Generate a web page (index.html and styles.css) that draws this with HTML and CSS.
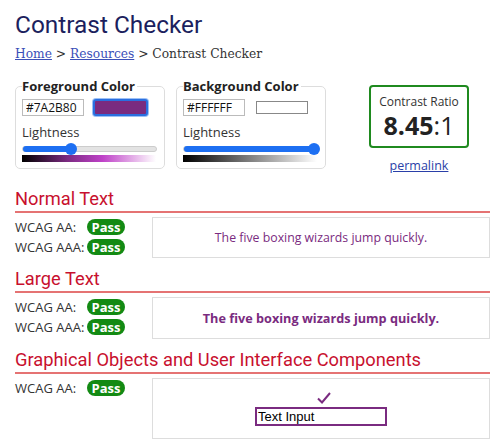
FILE: index.html
```html
<!DOCTYPE html>
<html>
<head>
<meta charset="utf-8">
<link rel="stylesheet" href="styles.css">
</head>
<body>
<h1 class="title">Contrast Checker</h1>
<nav class="crumbs"><a href="#">Home</a> &gt; <a href="#">Resources</a> &gt; Contrast Checker</nav>

<div class="top">
  <fieldset class="picker">
    <legend>Foreground Color</legend>
    <div class="row">
      <input class="hex" type="text" value="#7A2B80">
      <span class="swatch fg"></span>
    </div>
    <div class="light">Lightness</div>
    <div class="slider"><span class="fill" style="width:48px"></span><span class="thumb" style="left:48px"></span></div>
    <div class="grad fg-grad"></div>
  </fieldset>
  <fieldset class="picker">
    <legend>Background Color</legend>
    <div class="row">
      <input class="hex" type="text" value="#FFFFFF">
      <span class="swatch bg"></span>
    </div>
    <div class="light">Lightness</div>
    <div class="slider"><span class="fill" style="width:130px"></span><span class="thumb" style="left:130px"></span></div>
    <div class="grad bg-grad"></div>
  </fieldset>
  <div class="ratio-col">
    <div class="ratio">
      <div class="ratio-label">Contrast Ratio</div>
      <div class="ratio-val"><b>8.45</b>:1</div>
    </div>
    <a class="permalink" href="#">permalink</a>
  </div>
</div>

<h2 class="sec">Normal Text</h2>
<div class="res">
  <div class="levels">
    <div class="lv"><span class="lbl">WCAG AA:</span><span class="pass">Pass</span></div>
    <div class="lv"><span class="lbl">WCAG AAA:</span><span class="pass">Pass</span></div>
  </div>
  <div class="sample normal">The five boxing wizards jump quickly.</div>
</div>

<h2 class="sec">Large Text</h2>
<div class="res">
  <div class="levels">
    <div class="lv"><span class="lbl">WCAG AA:</span><span class="pass">Pass</span></div>
    <div class="lv"><span class="lbl">WCAG AAA:</span><span class="pass">Pass</span></div>
  </div>
  <div class="sample large">The five boxing wizards jump quickly.</div>
</div>

<h2 class="sec">Graphical Objects and User Interface Components</h2>
<div class="res">
  <div class="levels">
    <div class="lv"><span class="lbl">WCAG AA:</span><span class="pass">Pass</span></div>
  </div>
  <div class="sample ui">
    <svg class="check" width="14" height="12" viewBox="0 0 14 12"><path d="M1 6.5 L5 10.5 L13 1" fill="none" stroke="#7A2B80" stroke-width="2"/></svg>
    <div class="tinput">Text Input</div>
  </div>
</div>
</body>
</html>
```

FILE: styles.css
```css
* { box-sizing: border-box; }
body {
  margin: 0;
  padding: 10px 10px 0 15px;
  font-family: "Open Sans", sans-serif;
  color: #333;
  background: #fff;
  width: 500px;
  height: 444px;
  overflow: hidden;
}
.title {
  margin: 0;
  font-family: Roboto, sans-serif;
  font-weight: 400;
  font-size: 24.4px;
  line-height: 30px;
  color: #1c1f5e;
}
.crumbs {
  margin-top: 6px;
  font-family: "DejaVu Serif", serif;
  font-size: 12.25px;
  line-height: 16px;
  color: #333;
}
.crumbs a { color: #3b4fb8; }
.top {
  display: flex;
  margin-top: 17px;
  height: 109px;
}
.picker {
  margin: 0 11px 0 0;
  width: 150px;
  height: 90px;
  border: 1px solid #ddd;
  border-radius: 5px;
  padding: 0 6px 0 6px;
}
.picker legend {
  font-weight: 700;
  font-size: 13px;
  color: #222;
  padding: 0 2px 0 0;
  line-height: 14px;
}
.row { display: flex; gap: 9px; margin-top: 6px; }
.hex {
  width: 62px;
  height: 17px;
  border: 1px solid #bbb;
  font-family: "Open Sans", sans-serif;
  font-size: 12px;
  padding: 0 3px;
  color: #111;
}
.swatch {
  width: 55px;
  height: 17px;
  border: 1px solid #888;
}
.swatch.fg { background: #7A2B80; border: 2px solid #2a6fe0; border-radius: 3px; box-shadow: 0 0 0 1px #9cc0f5; }
.swatch.bg { background: #fff; width: 52px; height: 13px; margin-top: 2px; margin-left: 2px; }
.light { font-size: 13px; line-height: 16px; margin-top: 8px; color: #333; }
.slider {
  position: relative;
  height: 6px;
  margin-top: 6px;
  border-radius: 3px;
  background: #e3e3e3;
  border: 1px solid #ccc;
  width: 135px;
}
.slider .fill {
  position: absolute;
  left: 0; top: -1px;
  height: 6px;
  border-radius: 3px;
  background: #1d6ff2;
}
.slider .thumb {
  position: absolute;
  top: -4px;
  width: 12px;
  height: 12px;
  margin-left: -6px;
  border-radius: 50%;
  background: #1d6ff2;
}
.grad { height: 7px; margin-top: 3px; width: 134px; }
.fg-grad { background: linear-gradient(to right, hsl(296,50%,0%), hsl(296,50%,34%) 34%, hsl(296,55%,52%) 60%, hsl(296,50%,100%)); }
.bg-grad { background: linear-gradient(to right, #000, #fff); }
.ratio-col {
  margin-left: 32px;
  display: flex;
  flex-direction: column;
  align-items: center;
  width: 100px;
}
.ratio {
  margin-top: 6px;
  width: 100px;
  height: 63px;
  border: 2px solid #1f8a1f;
  border-radius: 4px;
  text-align: center;
  padding-top: 7px;
}
.ratio-label { font-size: 12px; line-height: 15px; color: #333; }
.ratio-val { font-size: 25px; line-height: 30px; color: #222; margin-top: 1px; }
.ratio-val b { font-weight: 700; }
.permalink { margin-top: 9px; font-size: 12.5px; color: #2a3fa8; }
.sec {
  margin: 0;
  font-family: Roboto, sans-serif;
  font-weight: 400;
  font-size: 18.3px;
  line-height: 22px;
  color: #c8102e;
  border-bottom: 2px solid #e57373;
  padding-bottom: 1px;
}
.res {
  display: flex;
  margin-top: 4px;
  margin-bottom: 10px;
}
.levels { width: 137px; }
.lv { display: flex; align-items: center; height: 20px; }
.lbl { width: 72px; font-size: 13px; color: #333; }
.pass {
  display: inline-block;
  background: #138a13;
  color: #fff;
  font-weight: 700;
  font-size: 13px;
  line-height: 16px;
  height: 16px;
  width: 38px;
  text-align: center;
  border-radius: 8px;
}
.sample {
  flex: 1;
  border: 1px solid #ddd;
  display: flex;
  align-items: center;
  justify-content: center;
  color: #7A2B80;
  height: 41px;
}
.sample.normal { font-size: 12.3px; }
.sample.large { font-size: 12.7px; font-weight: 700; height: 42px; }
.sample.ui {
  flex-direction: column;
  height: 61px;
  justify-content: flex-start;
  padding-top: 13px;
}
.check { display: block; margin-left: 5px; }
.tinput {
  margin-top: 3px;
  width: 132px;
  height: 19px;
  border: 2px solid #7A2B80;
  font-family: "Liberation Sans", Arial, sans-serif;
  font-size: 13px;
  line-height: 15px;
  color: #000;
  padding-left: 1px;
}
```
